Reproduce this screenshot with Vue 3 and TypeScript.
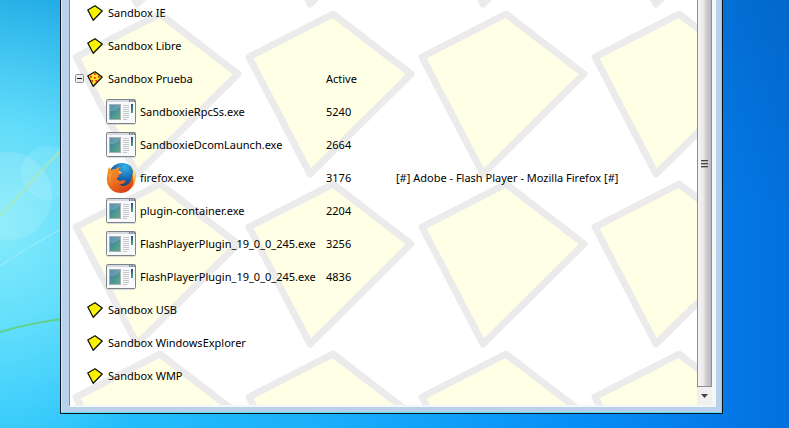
<script setup lang="ts">
type Icon = 'box' | 'active' | 'app' | 'firefox'

interface Row {
  name: string
  icon: Icon
  status?: string
  title?: string
  child?: boolean
  open?: boolean
}

const rows: Row[] = [
  { name: 'Sandbox IE', icon: 'box' },
  { name: 'Sandbox Libre', icon: 'box' },
  { name: 'Sandbox Prueba', icon: 'active', status: 'Active', open: true },
  { name: 'SandboxieRpcSs.exe', icon: 'app', status: '5240', child: true },
  { name: 'SandboxieDcomLaunch.exe', icon: 'app', status: '2664', child: true },
  { name: 'firefox.exe', icon: 'firefox', status: '3176', title: '[#] Adobe - Flash Player - Mozilla Firefox [#]', child: true },
  { name: 'plugin-container.exe', icon: 'app', status: '2204', child: true },
  { name: 'FlashPlayerPlugin_19_0_0_245.exe', icon: 'app', status: '3256', child: true },
  { name: 'FlashPlayerPlugin_19_0_0_245.exe', icon: 'app', status: '4836', child: true },
  { name: 'Sandbox USB', icon: 'box' },
  { name: 'Sandbox WindowsExplorer', icon: 'box' },
  { name: 'Sandbox WMP', icon: 'box' },
]
</script>

<template>
  <div class="desktop">
    <svg class="flares" width="62" height="428" viewBox="0 0 62 428" aria-hidden="true">
      <circle cx="48" cy="173" r="27" fill="#ffffff" opacity=".1" />
      <circle cx="8" cy="196" r="44" fill="#ffffff" opacity=".12" />
      <path d="M0 216L62 149" stroke="#b5ed9e" stroke-width="2" opacity=".6" />
      <path d="M0 266Q32 244 62 229" stroke="#ffffff" fill="none" opacity=".3" />
      <path d="M0 332Q30 323 62 319" stroke="#62cf7c" stroke-width="2" fill="none" opacity=".85" />
    </svg>

    <main class="window">
      <section class="view">
        <div class="list">
          <svg class="wallpaper" width="100%" height="100%" aria-hidden="true">
            <defs>
              <pattern id="kites" x="0" y="9" width="173" height="170" patternUnits="userSpaceOnUse">
                <path d="M90 5L168 65L67 165L6 48Z" fill="#ffffe6" stroke="#ebebeb" stroke-width="7" stroke-linejoin="round" />
              </pattern>
            </defs>
            <rect width="100%" height="100%" fill="url(#kites)" />
          </svg>

          <table class="tree">
            <colgroup>
              <col class="col-name" />
              <col class="col-status" />
              <col />
            </colgroup>
            <tbody>
              <tr v-for="(row, i) in rows" :key="i">
                <td>
                  <div class="name" :class="{ child: row.child, parent: row.open }">
                    <button v-if="row.open" class="toggle" type="button" aria-label="Collapse" aria-expanded="true">
                      <svg width="9" height="9" viewBox="0 0 9 9">
                        <rect x=".5" y=".5" width="8" height="8" rx="1" fill="#eeeeee" stroke="#8d8d8d" />
                        <path d="M2 4.5H7" stroke="#111111" />
                      </svg>
                    </button>

                    <svg v-if="row.icon === 'box' || row.icon === 'active'" class="icon" width="16" height="16" viewBox="0 0 16 16">
                      <path d="M8 .8L15.2 6L6.2 15.2L.8 5Z" :fill="row.icon === 'box' ? '#fff800' : '#ffe024'" stroke="#111100" stroke-width="1.3" stroke-linejoin="round" />
                      <path v-if="row.icon === 'box'" d="M2.5 6L8 2.4L11 5L5 12Z" fill="#e0e000" opacity=".3" />
                      <g v-else fill="#e02310">
                        <rect x="7" y="2.4" width="1.7" height="1.6" />
                        <rect x="3" y="5" width="1.7" height="1.7" />
                        <rect x="7" y="6" width="1.7" height="1.7" />
                        <rect x="11" y="5" width="1.7" height="1.7" />
                        <rect x="4.4" y="9" width="1.7" height="1.7" />
                        <rect x="8.4" y="9" width="1.7" height="1.7" />
                      </g>
                    </svg>

                    <svg v-else-if="row.icon === 'app'" class="icon" width="30" height="26" viewBox="0 0 30 26">
                      <defs>
                        <linearGradient id="pane" x1="0" y1="0" x2="1" y2="1">
                          <stop offset="0" stop-color="#3f6fa0" />
                          <stop offset=".5" stop-color="#4a9298" />
                          <stop offset="1" stop-color="#59b37a" />
                        </linearGradient>
                        <linearGradient id="meter" x1="0" y1="0" x2="0" y2="1">
                          <stop offset="0" stop-color="#2b4a86" />
                          <stop offset="1" stop-color="#4fa878" />
                        </linearGradient>
                      </defs>
                      <rect x=".5" y=".5" width="29" height="24" rx="1" fill="#f8f9fa" stroke="#7d838b" />
                      <path d="M1 1.5H29M1 2.5H29" stroke="#d5dae0" />
                      <path d="M23 2H24.4M25.4 2H26.8M27.6 2H29" stroke="#59616b" stroke-width="1.5" />
                      <rect x="3.5" y="5.5" width="11" height="15" fill="url(#pane)" stroke="#a9afb5" />
                      <path d="M4 12Q9 13 14 8V6H4Z" fill="#a9cddd" opacity=".3" />
                      <path d="M17 6.5H23M17 8.5H23M17 10.5H23M17 12.5H23M17 14.5H23M17 16.5H23M17 18.5H23M17 20.5H21" stroke="#c4c6c8" />
                      <rect x="25" y="5" width="2" height="9" fill="url(#meter)" />
                      <path d="M1 25.5H29" stroke="#c6c8cb" opacity=".6" />
                    </svg>

                    <svg v-else class="icon" width="30" height="32" viewBox="0 0 30 32">
                      <defs>
                        <radialGradient id="globe" cx=".6" cy=".15" r=".8">
                          <stop offset="0" stop-color="#35b4e9" />
                          <stop offset=".55" stop-color="#1767b0" />
                          <stop offset="1" stop-color="#123366" />
                        </radialGradient>
                        <linearGradient id="fox" x1=".1" y1="0" x2=".7" y2="1">
                          <stop offset="0" stop-color="#f39a2c" />
                          <stop offset=".5" stop-color="#ee7220" />
                          <stop offset="1" stop-color="#d63c17" />
                        </linearGradient>
                        <linearGradient id="tail" x1="0" y1="0" x2="0" y2="1">
                          <stop offset="0" stop-color="#fff1a0" />
                          <stop offset=".5" stop-color="#f9c83b" />
                          <stop offset="1" stop-color="#ec721f" />
                        </linearGradient>
                      </defs>
                      <circle cx="16" cy="14.5" r="13.5" fill="url(#globe)" />
                      <path d="M25 4Q31 10 29.6 18Q28 28 17 30Q27 24 26.5 14L27 9Z" fill="url(#tail)" />
                      <path d="M3 5L5.3 8Q7.5 6.5 10 7Q12 4.8 14 4.7Q12.4 6.5 13 8.7L16 10.2Q15.5 12 12.4 13.2L13 15Q11 14.5 10.7 16.7Q12 19.5 15.3 18.6Q18 17.5 20 19Q17.5 23.2 12.8 22Q18 26 23 21.5Q26 18 26 12.6Q28.5 18 26.8 23Q23 31 15 31Q5 31 1.5 22Q0 17 1.5 12Q1.4 8.4 3 5Z" fill="url(#fox)" />
                      <path d="M3 12Q2 20 7 25Q4 22 4.5 16L6 11Z" fill="#f6ab3c" opacity=".5" />
                      <path d="M12.8 9L16 10.2L13.2 11Z" fill="#ffffff" opacity=".8" />
                    </svg>
                    <span>{{ row.name }}</span>
                  </div>
                </td>
                <td>{{ row.status }}</td>
                <td>{{ row.title }}</td>
              </tr>
            </tbody>
          </table>
        </div>

        <div class="scrollbar">
          <div class="thumb">
            <svg width="7" height="9" viewBox="0 0 7 9" aria-hidden="true">
              <path d="M0 .5H7M0 3.5H7M0 6.5H7" stroke="#444444" />
              <path d="M0 1.5H7M0 4.5H7M0 7.5H7" stroke="#aaaaaa" />
            </svg>
          </div>
          <button class="down" type="button" aria-label="Scroll down">
            <svg width="7" height="4" viewBox="0 0 7 4"><path d="M0 0H7L3.5 4Z" fill="#444444" /></svg>
          </button>
        </div>
      </section>
    </main>
  </div>
</template>

<style>
body {
  margin: 0;
}
</style>

<style scoped>
.desktop {
  position: relative;
  box-sizing: border-box;
  min-height: 100vh;
  padding: 0 66px 13px 60px;
  overflow: hidden;
  background:
    radial-gradient(ellipse 220px 240px at 0 225px, rgba(150, 242, 250, 0.85), rgba(120, 232, 252, 0.75) 40%, transparent),
    linear-gradient(to bottom, rgba(0, 70, 140, 0.2), transparent 50%),
    linear-gradient(to right, #2ac6fb, #1ab0fb 40%, #058cf6 75%, #047ae8 91%, #0370dc);
  color: #000;
  font: 11px/16px "Noto Sans", "Open Sans", sans-serif;
}

.flares {
  position: absolute;
  top: 0;
  left: 0;
}

.window {
  position: relative;
  padding: 0 6px 6px 8px;
  border: 1px solid #101820;
  border-top: 0;
  background: #b9d1ea;
  box-shadow: inset -1px -1px #58e0fa, inset 1px 0 #d6e8f6;
}

.view {
  display: flex;
  padding-right: 4px;
  border-left: 1px solid #80868c;
  border-bottom: 2px solid #f4f6f8;
  background: #f6f6f6;
}

.list {
  position: relative;
  flex: 1;
  min-width: 0;
  padding-bottom: 13px;
  overflow: hidden;
  background: #fff;
}

.wallpaper {
  position: absolute;
  inset: 0;
}

.tree {
  position: relative;
  width: 100%;
  margin-top: -4px;
  border-collapse: collapse;
  table-layout: fixed;
}

.col-name {
  width: 256px;
}

.col-status {
  width: 70px;
}

td {
  height: 33px;
  padding: 0;
  white-space: nowrap;
}

.name {
  display: flex;
  align-items: center;
  gap: 5px;
  height: 33px;
  padding-left: 17px;
}

.name.child {
  gap: 4px;
  padding-left: 36px;
}

.name.parent {
  padding-left: 5px;
}

.parent .toggle {
  margin-right: -2px;
}

.icon {
  flex: none;
}

button {
  display: flex;
  padding: 0;
  border: 0;
  background: none;
}

.scrollbar {
  display: flex;
  flex-direction: column;
  width: 15px;
  background: #f0f0f0;
}

.thumb {
  display: flex;
  flex: 1;
  align-items: center;
  justify-content: center;
  border: 1px solid #8e8e93;
  border-top: 0;
  background: linear-gradient(to right, #f5f5f5, #e8e8ea 45%, #cfcfd4 60%, #b9b9c0);
}

.thumb svg {
  margin-bottom: 58px;
}

.down {
  align-items: center;
  justify-content: center;
  height: 18px;
}
</style>
